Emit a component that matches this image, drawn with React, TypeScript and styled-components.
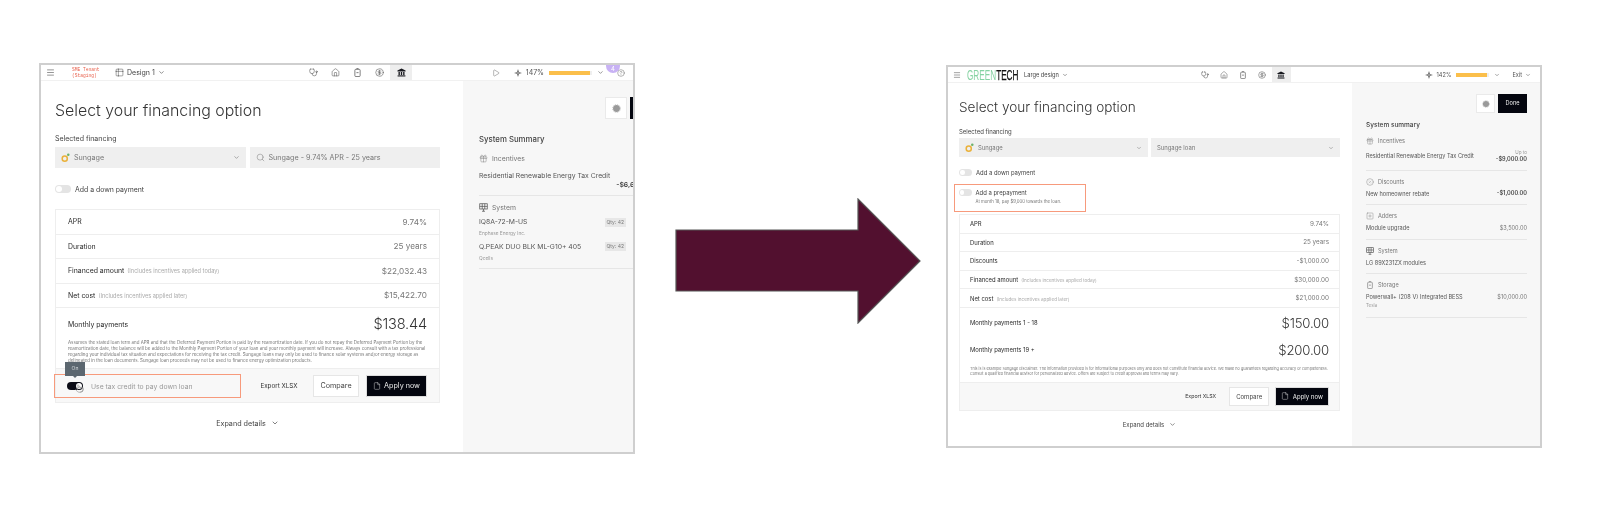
import styled, { createGlobalStyle } from "styled-components";
import {
  ChevronDown,
  CircleHelp,
  CirclePercent,
  CircleDollarSign,
  File,
  Gift,
  House,
  Menu,
  Play,
  Pointer,
  Search,
  SquarePlus,
  Stethoscope,
  Table2,
} from "lucide-react";

const GlobalStyle = createGlobalStyle`
  html, body {
    margin: 0;
    padding: 0;
    background: #fff;
    font-family: Inter, "Liberation Sans", sans-serif;
  }
`;

const Page = styled.div`
  display: flex;
  align-items: flex-start;
  width: 1600px;
  height: 522px;
  padding: 63px 0 0 39px;
  box-sizing: border-box;
  overflow: hidden;
`;

const Window = styled.div`
  position: relative;
  width: 596px;
  flex: none;
  display: flex;
  flex-direction: column;
  box-sizing: border-box;
  border: 2px solid #cfcfcf;
  overflow: hidden;
  background: #fff;
  color: #333;
`;

/* the before-state is a larger, softer capture than the after-state */
const BeforeWindow = styled(Window)`
  height: 391px;
  filter: blur(0.55px);
  --nav-start: 261px;
  --nav-cell: 22px;
  --brand-font: 7px;
  --status-font: 7px;
  --status-pr: 8px;
  --main-pad: 20px 23px 0 14px;
  --title: 15.9px;
  --title-h: 20px;
  --label: 7px;
  --label-mt: 13px;
  --label-h: 10px;
  --select-mt: 3px;
  --select-h: 21px;
  --select-gap: 4px;
  --select-font: 7.2px;
  --toggle-w: 16px;
  --toggle-h: 8px;
  --toggle-mt: 16px;
  --table-mt: 15px;
  --row-h: 24.5px;
  --row-pad: 12px;
  --row-font: 6.9px;
  --row-value: 8.2px;
  --row-note: 5.6px;
  --price: 14.6px;
  --fine: 4.45px;
  --fine-lh: 6px;
  --fine-top: 0;
  --footer-h: 35px;
  --foot-gap: 7px;
  --export-mr: 9px;
  --btn-h: 22px;
  --btn-font: 7.2px;
  --solid-pad: 6px;
  --expand-mt: 15px;
  --side-w: 170px;
  --side-pad: 16px 0 0 16px;
  --side-inner: 175px;
  --gear: 22px;
  --side-title: 7.8px;
  --side-title-mt: 15px;
  --side-first: 9px;
  --side-pt: 7px;
  --side-text: 6.8px;
  --side-sub: 4.8px;
  --sub-mt: 2.5px;
`;

const AfterWindow = styled(Window)`
  height: 383px;
  margin: 2px 0 0 25px;
  filter: blur(0.4px);
  --nav-start: 247.5px;
  --nav-cell: 19px;
  --brand-font: 5.7px;
  --status-font: 5.6px;
  --status-pr: 9px;
  --main-pad: 15px 12px 0 11px;
  --title: 13.6px;
  --title-h: 18px;
  --label: 6px;
  --label-mt: 12px;
  --label-h: 8px;
  --select-mt: 2px;
  --select-h: 19px;
  --select-gap: 3px;
  --select-font: 5.9px;
  --toggle-w: 13px;
  --toggle-h: 6.5px;
  --toggle-mt: 11.5px;
  --table-mt: 2px;
  --row-h: 18.6px;
  --row-pad: 10px;
  --row-font: 5.9px;
  --row-value: 6.3px;
  --row-note: 4.6px;
  --price: 13.2px;
  --fine: 3.75px;
  --fine-lh: 5px;
  --fine-top: 4px;
  --footer-h: 29px;
  --foot-gap: 6px;
  --export-mr: 7px;
  --btn-h: 19px;
  --btn-font: 6px;
  --solid-pad: 5.2px;
  --expand-mt: 9px;
  --side-w: 188px;
  --side-pad: 11px 13px 0 14px;
  --side-inner: 161px;
  --gear: 19px;
  --side-title: 6.5px;
  --side-title-mt: 7px;
  --side-first: 6px;
  --side-pt: 6px;
  --side-text: 5.6px;
  --side-sub: 4.5px;
  --sub-mt: 1px;
`;

const TopBar = styled.header`
  position: relative;
  display: grid;
  grid-template-columns: var(--nav-start) auto 1fr;
  height: 16px;
  flex: none;
  align-items: center;
  border-bottom: 1px solid #f1f1f1;
  box-sizing: border-box;
`;

const Brand = styled.div`
  display: flex;
  align-items: center;
  padding-left: 5px;
  font-size: var(--brand-font);
  color: #444;
`;

const Tenant = styled.div`
  width: 31px;
  margin: 0 12px 0 17px;
  font-family: "Liberation Mono", monospace;
  font-size: 4.6px;
  line-height: 6px;
  color: #e8604c;
  white-space: nowrap;
`;

const Logo = styled.div`
  width: 49px;
  margin: 0 5px 0 6px;
  font-family: "Liberation Sans", sans-serif;
  font-size: 14px;
  line-height: 12px;
  white-space: nowrap;
  transform: scaleX(0.585);
  transform-origin: left center;
  color: #111;
  -webkit-text-stroke: 0.25px #111;
  span {
    color: #86d3a3;
    -webkit-text-stroke: 0;
  }
`;

const DesignName = styled.span`
  margin: 0 3px 0 3px;
  white-space: nowrap;
`;

const Nav = styled.nav`
  display: flex;
  height: 100%;
`;

const NavCell = styled.div<{ $active?: boolean }>`
  width: var(--nav-cell);
  display: flex;
  align-items: center;
  justify-content: center;
  background: ${(p) => (p.$active ? "#eeeeee" : "transparent")};
  color: #555;
`;

const Status = styled.div`
  display: flex;
  align-items: center;
  justify-content: flex-end;
  padding-right: var(--status-pr);
  font-size: var(--status-font);
  color: #555;
`;

const StatusGap = styled.span<{ $w: number }>`
  width: ${(p) => p.$w}px;
`;

const Percent = styled.span`
  margin-left: 4px;
`;

const Meter = styled.div<{ $w: number }>`
  width: ${(p) => p.$w}px;
  height: 4px;
  margin: 0 5px;
  background: #efefef;
`;

const MeterFill = styled.div`
  height: 100%;
  background: #fbbf4b;
`;

const ExitCaret = styled(ChevronDown)`
  margin-left: 3px;
`;

const NoticeBadge = styled.span`
  position: absolute;
  top: -6px;
  right: 13px;
  width: 14px;
  height: 14px;
  border-radius: 7px;
  background: #c8b2f4;
  color: #fff;
  font-size: 6px;
  line-height: 19px;
  text-align: center;
`;

const Body = styled.div`
  flex: 1;
  display: flex;
  min-height: 0;
`;

const Main = styled.main`
  flex: 1;
  min-width: 0;
  display: flex;
  flex-direction: column;
  padding: var(--main-pad);
`;

const Title = styled.h1`
  margin: 0;
  font-size: var(--title);
  line-height: var(--title-h);
  font-weight: 300;
  color: #333;
  white-space: nowrap;
`;

const FieldLabel = styled.div`
  margin-top: var(--label-mt);
  font-size: var(--label);
  line-height: var(--label-h);
  color: #444;
`;

const Selects = styled.div`
  display: grid;
  grid-template-columns: 1fr 1fr;
  gap: var(--select-gap);
  margin-top: var(--select-mt);
`;

const SelectBox = styled.div`
  display: flex;
  align-items: center;
  gap: 4px;
  height: var(--select-h);
  padding: 0 6px;
  background: #efefef;
  font-size: var(--select-font);
  color: #777;
  white-space: nowrap;
`;

const SelectCaret = styled(ChevronDown)`
  margin-left: auto;
`;

const ToggleRow = styled.div<{ $mt?: string }>`
  display: flex;
  align-items: center;
  gap: 4px;
  height: var(--label-h);
  margin-top: ${(p) => p.$mt ?? "var(--toggle-mt)"};
  font-size: var(--row-font);
  color: #444;
`;

const Toggle = styled.span<{ $on?: boolean }>`
  position: relative;
  flex: none;
  width: var(--toggle-w);
  height: var(--toggle-h);
  border-radius: 5px;
  background: ${(p) => (p.$on ? "#0b0c16" : "#e4e4e4")};
  &::after {
    content: "";
    position: absolute;
    top: 1px;
    bottom: 1px;
    width: calc(var(--toggle-h) - 2px);
    border-radius: 50%;
    background: #fff;
    ${(p) => (p.$on ? "right: 1px;" : "left: 1px;")}
  }
`;

const Callout = styled.div`
  width: 132px;
  height: 28px;
  margin: 7.5px 0 0 -5px;
  padding: 3.5px 0 0 3.5px;
  box-sizing: border-box;
  border: 1.5px solid #f79a7c;
`;

const CalloutHint = styled.div`
  margin: 2px 0 0 17px;
  font-size: 4.3px;
  line-height: 6px;
  color: #777;
  white-space: nowrap;
`;

const Table = styled.section`
  margin-top: var(--table-mt);
  border: 1px solid #eeeeee;
  border-bottom: 0;
  display: flex;
  flex-direction: column;
`;

const Row = styled.div`
  display: flex;
  align-items: center;
  justify-content: space-between;
  box-sizing: border-box;
  height: var(--row-h);
  padding: 0 var(--row-pad);
  border-bottom: 1px solid #eeeeee;
  font-size: var(--row-font);
  color: #2a2a2a;
`;

const RowNote = styled.span`
  margin-left: 3px;
  font-size: var(--row-note);
  color: #aaa;
`;

const RowValue = styled.span`
  font-size: var(--row-value);
  color: #777;
`;

const PriceRow = styled.div<{ $h: number }>`
  display: flex;
  align-items: center;
  justify-content: space-between;
  height: ${(p) => p.$h}px;
  padding: 0 var(--row-pad);
  font-size: var(--row-font);
  color: #2a2a2a;
`;

const Price = styled.span`
  font-size: var(--price);
  font-weight: 300;
  letter-spacing: -0.2px;
  color: #333;
`;

const Fine = styled.p<{ $h: number }>`
  margin: 0;
  box-sizing: border-box;
  height: ${(p) => p.$h}px;
  padding: var(--fine-top) var(--row-pad) 0;
  font-size: var(--fine);
  line-height: var(--fine-lh);
  color: #777;
`;

const Footer = styled.div`
  display: flex;
  align-items: center;
  justify-content: flex-end;
  gap: var(--foot-gap);
  height: var(--footer-h);
  padding-right: var(--row-pad);
  box-sizing: border-box;
  background: #f8f8f8;
  border-top: 1px solid #eeeeee;
  border-bottom: 1px solid #eeeeee;
  font-size: var(--btn-font);
`;

const TaxCallout = styled.div`
  position: relative;
  display: flex;
  align-items: center;
  gap: 8px;
  width: 187px;
  height: 24px;
  margin: 1px auto 0 -2px;
  padding-left: 12px;
  box-sizing: border-box;
  border: 1.5px solid #f79a7c;
  font-size: 6.8px;
  color: #999;
`;

const OnTip = styled.span`
  position: absolute;
  left: 10px;
  top: -13px;
  width: 20px;
  height: 14px;
  background: #5c6770;
  color: #d5d9dc;
  font-size: 5px;
  line-height: 13px;
  text-align: center;
  &::after {
    content: "";
    position: absolute;
    left: 8px;
    bottom: -2px;
    border: 2px solid transparent;
    border-bottom: 0;
    border-top-color: #5c6770;
  }
`;

const Hand = styled.span`
  position: absolute;
  left: 20px;
  top: 9px;
  color: #888;
`;

const ExportLink = styled.span`
  margin-right: var(--export-mr);
  font-size: 0.87em;
  color: #333;
  white-space: nowrap;
`;

const OutlineButton = styled.button`
  height: var(--btn-h);
  padding: 0 6px;
  border: 1px solid #e6e6e6;
  background: #fff;
  color: #444;
  font: inherit;
`;

const SolidButton = styled.button`
  display: flex;
  align-items: center;
  gap: 3.5px;
  height: var(--btn-h);
  padding: 0 var(--solid-pad);
  border: 1px solid #ddd;
  background: #04060f;
  color: #eee;
  font: inherit;
  white-space: nowrap;
`;

const Expand = styled.div`
  display: flex;
  align-items: center;
  justify-content: center;
  gap: 5px;
  height: 10px;
  margin-top: var(--expand-mt);
  font-size: var(--btn-font);
  color: #444;
`;

const Sidebar = styled.aside`
  flex: none;
  width: var(--side-w);
  box-sizing: border-box;
  padding: var(--side-pad);
  background: #f7f7f7;
`;

const SideInner = styled.div`
  width: var(--side-inner);
`;

const SideActions = styled.div`
  display: flex;
  justify-content: flex-end;
  gap: 3px;
`;

const GearButton = styled.span`
  display: flex;
  align-items: center;
  justify-content: center;
  width: var(--gear);
  height: var(--gear);
  box-sizing: border-box;
  background: #fff;
  border: 1px solid #eaeaea;
`;

const DoneButton = styled.span`
  min-width: 24px;
  height: var(--gear);
  padding: 0 7.5px;
  box-sizing: border-box;
  background: #04060f;
  color: #eee;
  font-size: 5.6px;
  line-height: var(--gear);
  text-align: center;
`;

const SideTitle = styled.h2`
  margin: var(--side-title-mt) 0 0;
  font-size: var(--side-title);
  line-height: 10px;
  font-weight: 500;
  color: #444;
`;

const SideSection = styled.section`
  padding: var(--side-pt) 0 6.5px;
  border-bottom: 1px solid #e6e6e6;
  &:first-of-type {
    padding-top: var(--side-first);
  }
`;

const SideHead = styled.div`
  display: flex;
  align-items: center;
  gap: 4px;
  height: 10px;
  font-size: var(--side-text);
  color: #777;
`;

const SideItem = styled.div<{ $mt?: number }>`
  display: flex;
  align-items: center;
  justify-content: space-between;
  margin-top: ${(p) => p.$mt ?? 3}px;
  min-height: 8px;
  font-size: var(--side-text);
  line-height: 8px;
  color: #555;
  white-space: nowrap;
`;

const SideSub = styled.div`
  margin-top: var(--sub-mt);
  font-size: var(--side-sub);
  line-height: 8px;
  color: #999;
`;

const Amount = styled.div`
  text-align: right;
  font-size: var(--side-text);
  line-height: 7px;
  font-weight: 600;
  color: #444;
  small {
    display: block;
    font-size: 4.6px;
    font-weight: 400;
    color: #999;
  }
`;

const PlainAmount = styled.span`
  color: #777;
`;

const QtyChip = styled.span`
  margin-right: 28px;
  padding: 0 2px;
  background: #e7e7e7;
  font-size: 5px;
  line-height: 9px;
  color: #777;
`;

const Arrow = styled.svg`
  flex: none;
  margin: 135px 0 0 40px;
`;

const SungageMark = () => (
  <svg width="9" height="9" viewBox="0 0 12 12">
    <circle cx="5" cy="7.5" r="3.4" fill="none" stroke="#eab13a" strokeWidth="2" />
    <circle cx="9.7" cy="2.3" r="1.7" fill="#6cb26a" />
  </svg>
);

const Bank = ({ size = 9 }: { size?: number }) => (
  <svg width={size} height={size} viewBox="0 0 12 12" fill="#16171d">
    <path d="M6 .6 11.4 3.4V4.6H.6V3.4Z" />
    <path d="M2 5.4h1.8v3.8H2zM5.1 5.4h1.8v3.8H5.1zM8.2 5.4H10v3.8H8.2z" />
    <path d="M.8 9.8h10.4v1.5H.8z" />
  </svg>
);

const CellBattery = ({ size = 9 }: { size?: number }) => (
  <svg width={size} height={size} viewBox="0 0 12 12" fill="none" stroke="currentColor" strokeWidth="1">
    <rect x="2.5" y="1.8" width="7" height="9.6" rx="1.2" />
    <path d="M4.6 .6h2.8M4.6 6.2h2.8" />
  </svg>
);

const Spark = () => (
  <svg width="8" height="8" viewBox="0 0 12 12" fill="#444">
    <path d="M6 0 7.3 4.7 12 6 7.3 7.3 6 12 4.7 7.3 0 6 4.7 4.7Z" />
    <circle cx="6" cy="6" r="1.2" fill="#fff" />
  </svg>
);

const PanelIcon = ({ size = 9 }: { size?: number }) => (
  <svg width={size} height={size} viewBox="0 0 12 12" fill="none" stroke="#555" strokeWidth="1">
    <rect x="1" y="1" width="10" height="7" />
    <path d="M1 4.5h10M4.3 1v7M7.7 1v7M6 8v3M4 11h4" />
  </svg>
);

const GearDisc = ({ size = 9 }: { size?: number }) => (
  <svg width={size} height={size} viewBox="0 0 12 12">
    <circle cx="6" cy="6" r="4.6" fill="#9a9a9a" />
    <circle cx="6" cy="6" r="5.3" fill="none" stroke="#b5b5b5" strokeWidth="1" strokeDasharray="1.4 1.4" />
  </svg>
);

const NavIcons = ({ size }: { size: number }) => (
  <Nav>
    <NavCell>
      <Stethoscope size={size} strokeWidth={1.5} />
    </NavCell>
    <NavCell>
      <House size={size} strokeWidth={1.5} />
    </NavCell>
    <NavCell>
      <CellBattery size={size} />
    </NavCell>
    <NavCell>
      <CircleDollarSign size={size} strokeWidth={1.5} />
    </NavCell>
    <NavCell $active>
      <Bank size={size} />
    </NavCell>
  </Nav>
);

const Before = () => (
  <BeforeWindow>
    <TopBar>
      <Brand>
        <Menu size={9} strokeWidth={1.5} />
        <Tenant>
          SME Tenant
          <br />
          (Staging)
        </Tenant>
        <Table2 size={9} strokeWidth={1.3} />
        <DesignName>Design 1</DesignName>
        <ChevronDown size={7} />
      </Brand>
      <NavIcons size={9} />
      <Status>
        <Play size={8} strokeWidth={1.3} />
        <StatusGap $w={14} />
        <Spark />
        <Percent>147%</Percent>
        <Meter $w={43}>
          <MeterFill style={{ width: "95%" }} />
        </Meter>
        <ChevronDown size={7} />
        <StatusGap $w={13} />
        <CircleHelp size={8} strokeWidth={1.3} />
      </Status>
      <NoticeBadge>4</NoticeBadge>
    </TopBar>
    <Body>
      <Main>
        <Title>Select your financing option</Title>
        <FieldLabel>Selected financing</FieldLabel>
        <Selects>
          <SelectBox>
            <SungageMark />
            Sungage
            <SelectCaret size={7} />
          </SelectBox>
          <SelectBox>
            <Search size={9} strokeWidth={1.3} />
            Sungage - 9.74% APR - 25 years
          </SelectBox>
        </Selects>
        <ToggleRow>
          <Toggle />
          Add a down payment
        </ToggleRow>
        <Table>
          <Row>
            APR
            <RowValue>9.74%</RowValue>
          </Row>
          <Row>
            Duration
            <RowValue>25 years</RowValue>
          </Row>
          <Row>
            <span>
              Financed amount<RowNote>(Includes incentives applied today)</RowNote>
            </span>
            <RowValue>$22,032.43</RowValue>
          </Row>
          <Row>
            <span>
              Net cost<RowNote>(Includes incentives applied later)</RowNote>
            </span>
            <RowValue>$15,422.70</RowValue>
          </Row>
          <PriceRow $h={32}>
            Monthly payments
            <Price>$138.44</Price>
          </PriceRow>
          <Fine $h={28}>
            Assumes the stated loan term and APR and that the Deferred Payment Portion is paid by the reamortization
            date. If you do not repay the Deferred Payment Portion by the reamortization date, the balance will be added
            to the Monthly Payment Portion of your loan and your monthly payment will increase. Always consult with a tax
            professional regarding your individual tax situation and expectations for receiving the tax credit. Sungage
            loans may only be used to finance solar systems and/or energy storage as delineated in the loan documents.
            Sungage loan proceeds may not be used to finance energy optimization products.
          </Fine>
          <Footer>
            <TaxCallout>
              <OnTip>On</OnTip>
              <Toggle $on />
              Use tax credit to pay down loan
              <Hand>
                <Pointer size={9} strokeWidth={1.5} />
              </Hand>
            </TaxCallout>
            <ExportLink>Export XLSX</ExportLink>
            <OutlineButton>Compare</OutlineButton>
            <SolidButton>
              <File size={8} strokeWidth={1.3} />
              Apply now
            </SolidButton>
          </Footer>
        </Table>
        <Expand>
          Expand details
          <ChevronDown size={8} />
        </Expand>
      </Main>
      <Sidebar>
        <SideInner>
          <SideActions>
            <GearButton>
              <GearDisc size={9} />
            </GearButton>
            <DoneButton />
          </SideActions>
          <SideTitle>System Summary</SideTitle>
          <SideSection>
            <SideHead>
              <Gift size={9} strokeWidth={1.2} />
              Incentives
            </SideHead>
            <SideItem $mt={9}>Residential Renewable Energy Tax Credit</SideItem>
            <SideItem $mt={0}>
              <span />
              <Amount>-$6,600.00</Amount>
            </SideItem>
          </SideSection>
          <SideSection>
            <SideHead>
              <PanelIcon />
              System
            </SideHead>
            <SideItem $mt={5}>
              IQ8A-72-M-US
              <QtyChip>Qty: 42</QtyChip>
            </SideItem>
            <SideSub>Enphase Energy Inc.</SideSub>
            <SideItem $mt={5}>
              Q.PEAK DUO BLK ML-G10+ 405
              <QtyChip>Qty: 42</QtyChip>
            </SideItem>
            <SideSub>Qcells</SideSub>
          </SideSection>
        </SideInner>
      </Sidebar>
    </Body>
  </BeforeWindow>
);

const After = () => (
  <AfterWindow>
    <TopBar>
      <Brand>
        <Menu size={8} strokeWidth={1.5} />
        <Logo>
          <span>GREEN</span>TECH
        </Logo>
        <DesignName>Large design</DesignName>
        <ChevronDown size={6} />
      </Brand>
      <NavIcons size={8} />
      <Status>
        <Spark />
        <Percent>142%</Percent>
        <Meter $w={33}>
          <MeterFill style={{ width: "94%" }} />
        </Meter>
        <ChevronDown size={6} />
        <StatusGap $w={12} />
        Exit
        <ExitCaret size={6} />
      </Status>
    </TopBar>
    <Body>
      <Main>
        <Title>Select your financing option</Title>
        <FieldLabel>Selected financing</FieldLabel>
        <Selects>
          <SelectBox>
            <SungageMark />
            Sungage
            <SelectCaret size={6} />
          </SelectBox>
          <SelectBox>
            Sungage loan
            <SelectCaret size={6} />
          </SelectBox>
        </Selects>
        <ToggleRow>
          <Toggle />
          Add a down payment
        </ToggleRow>
        <Callout>
          <ToggleRow $mt="0">
            <Toggle />
            Add a prepayment
          </ToggleRow>
          <CalloutHint>At month 18, pay $9,000 towards the loan.</CalloutHint>
        </Callout>
        <Table>
          <Row>
            APR
            <RowValue>9.74%</RowValue>
          </Row>
          <Row>
            Duration
            <RowValue>25 years</RowValue>
          </Row>
          <Row>
            Discounts
            <RowValue>-$1,000.00</RowValue>
          </Row>
          <Row>
            <span>
              Financed amount<RowNote>(Includes incentives applied today)</RowNote>
            </span>
            <RowValue>$30,000.00</RowValue>
          </Row>
          <Row>
            <span>
              Net cost<RowNote>(Includes incentives applied later)</RowNote>
            </span>
            <RowValue>$21,000.00</RowValue>
          </Row>
          <PriceRow $h={30}>
            Monthly payments 1 - 18
            <Price>$150.00</Price>
          </PriceRow>
          <PriceRow $h={24}>
            Monthly payments 19 +
            <Price>$200.00</Price>
          </PriceRow>
          <Fine $h={20}>
            This is is example Sungage disclaimer. The information provided is for informational purposes only and does
            not constitute financial advice. We make no guarantees regarding accuracy or completeness. Consult a
            qualified financial advisor for personalized advice. Offers are subject to credit approval and terms may
            vary.
          </Fine>
          <Footer>
            <ExportLink>Export XLSX</ExportLink>
            <OutlineButton>Compare</OutlineButton>
            <SolidButton>
              <File size={8} strokeWidth={1.3} />
              Apply now
            </SolidButton>
          </Footer>
        </Table>
        <Expand>
          Expand details
          <ChevronDown size={7} />
        </Expand>
      </Main>
      <Sidebar>
        <SideInner>
          <SideActions>
            <GearButton>
              <GearDisc size={8} />
            </GearButton>
            <DoneButton>Done</DoneButton>
          </SideActions>
          <SideTitle>System summary</SideTitle>
          <SideSection>
            <SideHead>
              <Gift size={8} strokeWidth={1.2} />
              Incentives
            </SideHead>
            <SideItem>
              Residential Renewable Energy Tax Credit
              <Amount>
                <small>Up to</small>
                -$9,000.00
              </Amount>
            </SideItem>
          </SideSection>
          <SideSection>
            <SideHead>
              <CirclePercent size={8} strokeWidth={1.2} />
              Discounts
            </SideHead>
            <SideItem>
              New homeowner rebate
              <Amount>-$1,000.00</Amount>
            </SideItem>
          </SideSection>
          <SideSection>
            <SideHead>
              <SquarePlus size={8} strokeWidth={1.2} />
              Adders
            </SideHead>
            <SideItem>
              Module upgrade
              <PlainAmount>$3,500.00</PlainAmount>
            </SideItem>
          </SideSection>
          <SideSection>
            <SideHead>
              <PanelIcon size={8} />
              System
            </SideHead>
            <SideItem>LG 89X231ZX modules</SideItem>
          </SideSection>
          <SideSection>
            <SideHead>
              <CellBattery size={8} />
              Storage
            </SideHead>
            <SideItem>
              Powerwall+ (208 V) Integrated BESS
              <PlainAmount>$10,000.00</PlainAmount>
            </SideItem>
            <SideSub>Tesla</SideSub>
          </SideSection>
        </SideInner>
      </Sidebar>
    </Body>
  </AfterWindow>
);

export default function App() {
  return (
    <>
      <GlobalStyle />
      <Page>
        <Before />
        <Arrow width="246" height="126" viewBox="0 0 246 126">
          <polygon points="1,32 183,32 183,1 245,63 183,125 183,93 1,93" fill="#52102f" stroke="#555" strokeWidth="1.2" />
        </Arrow>
        <After />
      </Page>
    </>
  );
}
